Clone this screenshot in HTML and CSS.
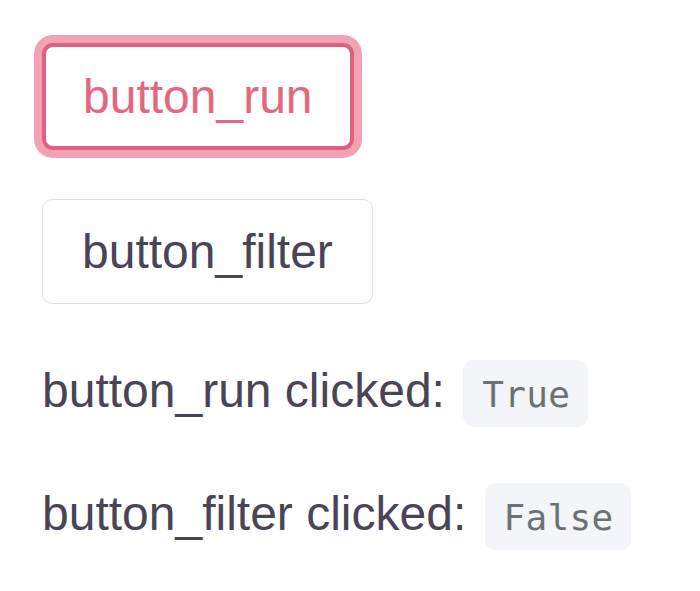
FILE: index.html
```html
<!DOCTYPE html>
<html>
<head>
<meta charset="utf-8">
<link rel="stylesheet" href="styles.css">
</head>
<body>
<main class="app">
  <button class="btn btn-focus">button_run</button>
  <button class="btn">button_filter</button>
  <p class="row">button_run clicked: <code class="pill">True</code></p>
  <p class="row">button_filter clicked: <code class="pill">False</code></p>
</main>
</body>
</html>
```
FILE: styles.css
```css
html, body {
  margin: 0;
  padding: 0;
  background: #ffffff;
}
.app {
  display: flex;
  flex-direction: column;
  align-items: flex-start;
  padding: 43px 0 0 42px;
  font-family: "Liberation Sans", Arial, sans-serif;
  color: #4a4556;
}
.btn {
  box-sizing: border-box;
  height: 105px;
  padding: 0 39px;
  margin: 0 0 56px 0;
  background: #ffffff;
  border: 1px solid #dde0e6;
  border-radius: 10px;
  font-family: "Liberation Sans", Arial, sans-serif;
  font-size: 48px;
  color: #4a4556;
  line-height: 1;
}
.btn-focus {
  height: 107px;
  margin-bottom: 49px;
  padding: 0 37px;
  border: 4px solid #e0607e;
  border-radius: 11px;
  color: #e6657f;
  box-shadow: 0 0 0 8px #f3a2b3;
}
.row {
  display: flex;
  align-items: baseline;
  margin: 0 0 56px 0;
  font-size: 48px;
  white-space: pre;
}
.pill {
  margin-left: 5px;
  padding: 14px 18px 12px 19px;
  background: #f3f5f8;
  border-radius: 10px;
  font-family: "DejaVu Sans Mono", "Liberation Mono", monospace;
  font-size: 36px;
  letter-spacing: 0.3px;
  color: #6c7272;
}
```
